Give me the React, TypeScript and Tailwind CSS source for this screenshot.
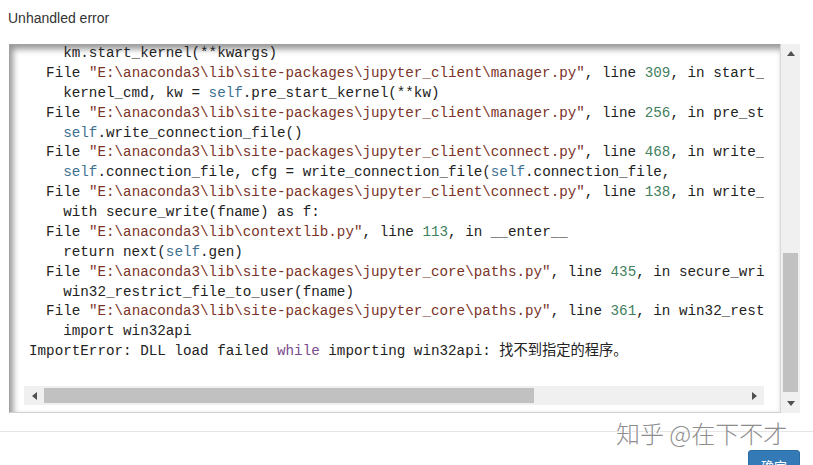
import React from "react";

type Seg = { t: string; c?: string };

const P = "#7b3328"; // path string colour
const S = "#3d7090"; // self
const N = "#3f8060"; // numbers
const K = "#7a4a8a"; // keyword

const file = (path: string, num: string, fn: string): Seg[] => [
  { t: "  File " },
  { t: `"${path}"`, c: P },
  { t: ", line " },
  { t: num, c: N },
  { t: `, in ${fn}` },
];

const lines: Seg[][] = [
  [{ t: "    km.start_kernel(**kwargs)" }],
  file("E:\\anaconda3\\lib\\site-packages\\jupyter_client\\manager.py", "309", "start_kernel"),
  [{ t: "    kernel_cmd, kw = " }, { t: "self", c: S }, { t: ".pre_start_kernel(**kw)" }],
  file("E:\\anaconda3\\lib\\site-packages\\jupyter_client\\manager.py", "256", "pre_start_kernel"),
  [{ t: "    " }, { t: "self", c: S }, { t: ".write_connection_file()" }],
  file("E:\\anaconda3\\lib\\site-packages\\jupyter_client\\connect.py", "468", "write_connection_file"),
  [
    { t: "    " },
    { t: "self", c: S },
    { t: ".connection_file, cfg = write_connection_file(" },
    { t: "self", c: S },
    { t: ".connection_file," },
  ],
  file("E:\\anaconda3\\lib\\site-packages\\jupyter_client\\connect.py", "138", "write_connection_file"),
  [{ t: "    with secure_write(fname) as f:" }],
  file("E:\\anaconda3\\lib\\contextlib.py", "113", "__enter__"),
  [{ t: "    return next(" }, { t: "self", c: S }, { t: ".gen)" }],
  file("E:\\anaconda3\\lib\\site-packages\\jupyter_core\\paths.py", "435", "secure_write"),
  [{ t: "    win32_restrict_file_to_user(fname)" }],
  file("E:\\anaconda3\\lib\\site-packages\\jupyter_core\\paths.py", "361", "win32_restrict_file_to_user"),
  [{ t: "    import win32api" }],
  [
    { t: "ImportError: DLL load failed " },
    { t: "while", c: K },
    { t: " importing win32api: 找不到指定的程序。" },
  ],
];

function Tri({ dir }: { dir: "up" | "down" | "left" | "right" }) {
  const pts =
    dir === "up"
      ? "0,5 4,0 8,5"
      : dir === "down"
      ? "0,0 8,0 4,5"
      : dir === "left"
      ? "5,0 5,8 0,4"
      : "0,0 0,8 5,4";
  const w = dir === "up" || dir === "down" ? 8 : 5;
  const h = dir === "up" || dir === "down" ? 5 : 8;
  return (
    <svg width={w} height={h} viewBox={`0 0 ${w} ${h}`}>
      <polygon points={pts} fill="#505050" />
    </svg>
  );
}

export default function App() {
  return (
    <div
      className="relative w-[813px] h-[465px] overflow-hidden bg-white"
      style={{ fontFamily: '"Liberation Sans", Arial, sans-serif' }}
    >
      <div className="pt-[8px] pl-[8px] h-[28px] text-[14px] leading-[20px] text-[#333]">
        Unhandled error
      </div>

      <div className="mt-[16px] ml-[9px] flex h-[369px] w-[791px]">
        {/* framed text area */}
        <div className="relative h-full w-[772px] border border-[#a0a0a0] border-b-[#d0d0d0] border-r-[#d8d8d8] bg-white shadow-[inset_3px_4px_6px_rgba(0,0,0,0.42)] pl-[14px] pr-[16px] pb-[7px] flex flex-col">
          <div className="flex-1 overflow-hidden pl-[5px]">
            <div
              className="mt-[-1px] whitespace-pre text-[14.25px] leading-[19.87px] text-[#222]"
              style={{
                fontFamily:
                  '"Liberation Mono", "DejaVu Sans Mono", "Noto Sans CJK SC", monospace',
              }}
            >
              {lines.map((segs, i) => (
                <div key={i}>
                  {segs.map((s, j) => (
                    <span key={j} style={s.c ? { color: s.c } : undefined}>
                      {s.t}
                    </span>
                  ))}
                </div>
              ))}
            </div>
          </div>
          {/* horizontal scrollbar */}
          <div className="flex h-[19px] shrink-0 bg-[#f0f0f0]">
            <div className="flex w-[20px] items-center justify-center">
              <Tri dir="left" />
            </div>
            <div className="my-[2px] w-[490px] bg-[#c1c1c1]" />
            <div className="flex-1" />
            <div className="flex w-[19px] items-center justify-center">
              <Tri dir="right" />
            </div>
          </div>
        </div>

        {/* vertical scrollbar */}
        <div className="flex h-full w-[19px] flex-col bg-[#f0f0f0]">
          <div className="flex h-[19px] items-center justify-center">
            <Tri dir="up" />
          </div>
          <div className="h-[190px]" />
          <div className="mx-[2px] h-[139px] bg-[#c1c1c1]" />
          <div className="flex-1" />
          <div className="flex h-[19px] items-center justify-center">
            <Tri dir="down" />
          </div>
        </div>
      </div>

      {/* footer */}
      <div className="mt-[18px] border-t border-[#e5e5e5] pt-[18px] pr-[13px] flex justify-end">
        <button
          className="rounded-[3px] border border-[#2e6da4] bg-[#337ab7] px-[12px] py-[6px] text-[13px] leading-[20px] text-white"
          style={{ fontFamily: '"Liberation Sans", "Noto Sans CJK SC", sans-serif' }}
        >
          确定
        </button>
      </div>

      {/* watermark */}
      <div
        className="absolute left-[616px] top-[419px] whitespace-pre text-[24px] leading-[28px] text-[#8e8e8e] font-light [text-shadow:0_0_2px_#ffffff,1px_1px_0_#ffffff]"
        style={{ fontFamily: '"Noto Sans CJK SC", sans-serif' }}
      >
        知乎 @在下不才
      </div>
    </div>
  );
}
